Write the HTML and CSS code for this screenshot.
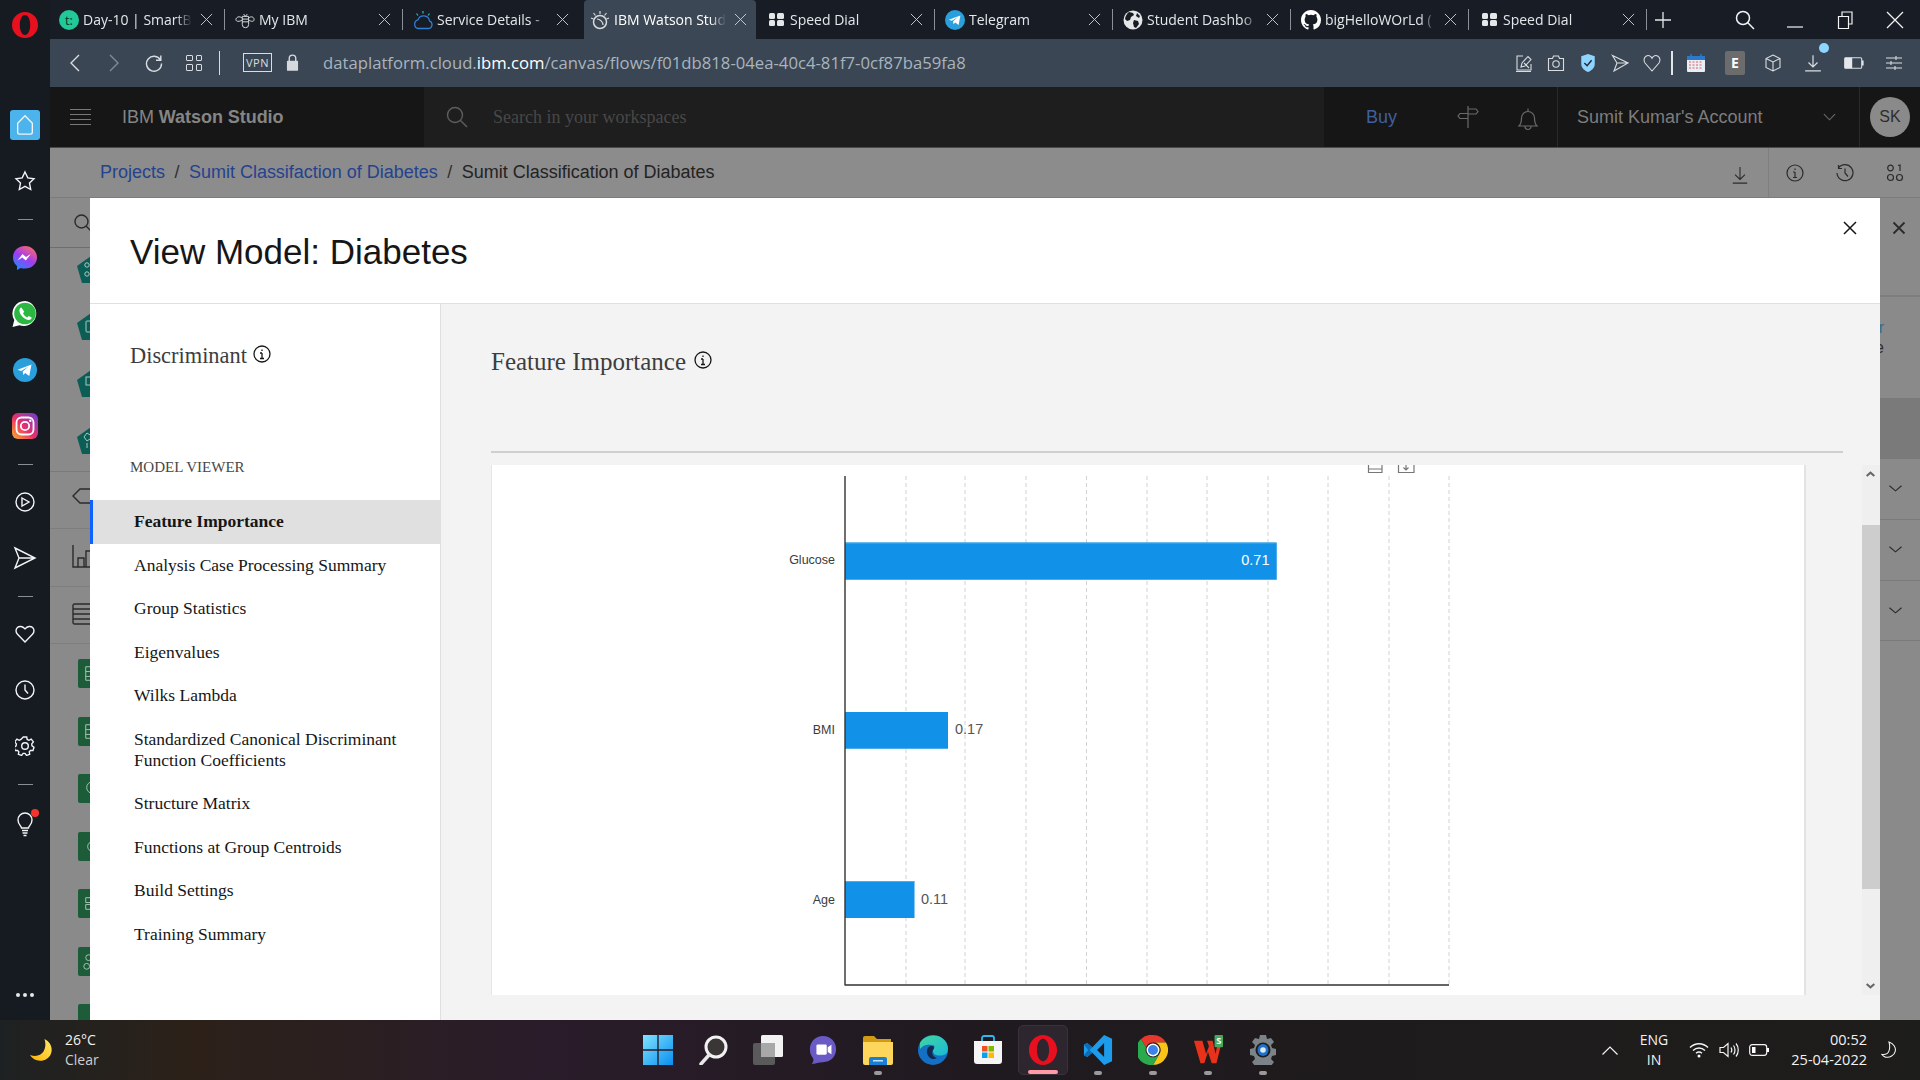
FILE: index.html
```html
<!DOCTYPE html>
<html lang="en">
<head>
<meta charset="utf-8">
<title>IBM Watson Studio</title>
<link rel="stylesheet" href="styles.css">
</head>
<body>
<div class="desktop">
  <aside class="rail">
    <div class="rail-logo">
      <svg class="s26" viewBox="0 0 26 26"><path fill="#e8101f" fill-rule="evenodd" d="M13 0a13 13 0 1 0 0 26a13 13 0 1 0 0-26zM13 3c3.200 0 5.200 4.500 5.200 10s-2 10-5.200 10s-5.200-4.500-5.200-10s2-10 5.200-10z"/></svg>
    </div>
    <div class="rail-home">
      <span class="home-btn"><svg class="s22" viewBox="0 0 22 24"><path class="w15" d="M11 2L3 10v10a2 2 0 0 0 2 2h12a2 2 0 0 0 2-2V10z"/></svg></span>
    </div>
    <div class="rail-item"><svg class="s22" viewBox="0 0 22 22"><path class="w14" d="M11 2l2.800 5.900 6.200.8-4.500 4.400 1.200 6.400L11 16.400l-5.700 3.100 1.200-6.400L2 8.700l6.200-.8z"/></svg></div>
    <div class="rail-sep rail-sep-wide"><i></i></div>
    <div class="rail-item">
      <svg class="s26" viewBox="0 0 26 26"><defs><linearGradient id="msg" x1="0.2" y1="1" x2="0.8" y2="0"><stop offset="0" stop-color="#1a8cff"/><stop offset=".5" stop-color="#a33bf0"/><stop offset="1" stop-color="#ff6a6a"/></linearGradient></defs><path fill="url(#msg)" d="M13 1C6 1 1 6 1 12.500c0 3.500 1.500 6.500 4 8.500v4l3.700-2c1.400.4 2.800.6 4.300.6c7 0 12-5 12-11.100S20 1 13 1z"/><path fill="#fff" d="M5.500 15.500l5-6.500 3.500 3 4.800-3-5 6.500-3.500-3z"/></svg>
    </div>
    <div class="rail-item">
      <svg class="s26" viewBox="0 0 26 26"><path fill="#fff" d="M13 0a12.500 12.500 0 0 0-10.700 19L.5 26l7-1.800A12.500 12.500 0 1 0 13 0z"/><circle cx="13" cy="12.500" r="10.800" fill="#2bb741"/><path fill="#fff" d="M9.300 6.500c-.6 0-1.900 1-1.900 3c0 4 5.200 9.500 9.300 9.500c2 0 3.100-1.400 3-2.500l-3-1.600-1.400 1.500c-1.800-.6-3.600-2.400-4.300-4.200l1.300-1.400z"/></svg>
    </div>
    <div class="rail-item">
      <svg class="s24" viewBox="0 0 24 24"><circle cx="12" cy="12" r="12" fill="#2a9fdc"/><path fill="#fff" d="M4.500 11.800l14-5.300-2.200 11.400-4.100-2.800-2 2-.5-3.500 5.600-4.900-7.200 4.300z"/></svg>
    </div>
    <div class="rail-item">
      <svg class="s26" viewBox="0 0 26 26"><defs><linearGradient id="ig" x1="0" y1="1" x2="1" y2="0"><stop offset="0" stop-color="#fdb022"/><stop offset=".45" stop-color="#e8306b"/><stop offset="1" stop-color="#6a3fd6"/></linearGradient></defs><rect width="26" height="26" rx="6" fill="url(#ig)"/><rect x="4.500" y="4.500" width="17" height="17" rx="5" class="w18"/><circle cx="13" cy="13" r="4.200" class="w18"/><circle cx="18.300" cy="7.700" r="1.200" fill="#fff"/></svg>
    </div>
    <div class="rail-sep"><i></i></div>
    <div class="rail-item"><svg class="s20" viewBox="0 0 20 20"><circle cx="10" cy="10" r="9" class="w14"/><path class="w14" d="M7 6l7 4-7 4z"/></svg></div>
    <div class="rail-item"><svg class="s24" viewBox="0 0 24 24"><path class="w14" d="M2 2l20 10L2 22l4-10zM6 12h16"/></svg></div>
    <div class="rail-sep"><i></i></div>
    <div class="rail-item"><svg class="s20" viewBox="0 0 20 18"><path class="w14" d="M10 17L2.500 9.300C.5 7.200.6 4.300 2.400 2.600c1.900-1.700 5.100-1.500 7.600 1.300c2.500-2.800 5.700-3 7.600-1.300c1.800 1.700 1.900 4.600-.1 6.700z"/></svg></div>
    <div class="rail-item"><svg class="s20" viewBox="0 0 20 20"><circle cx="10" cy="10" r="9" class="w14"/><path class="w14" d="M10 4.500V10l3 3.500"/></svg></div>
    <div class="rail-item"><svg class="s20" viewBox="0 0 20 20"><path class="w14" d="M8.300 1h3.400l.5 2.500 1.700.8 2.300-1.200 2.200 2.800-1.700 2 .3 1.900 2 1.400-1 3.300-2.500-.1-1.200 1.400.4 2.500-3.200 1.100-1.500-2h-1.900l-1.500 2-3.200-1.100.4-2.500-1.200-1.400-2.500.1-1-3.300 2-1.400.3-1.900-1.700-2 2.200-2.800 2.300 1.200 1.700-.8z"/><circle cx="10" cy="10" r="3.300" class="w14"/></svg></div>
    <div class="rail-sep"><i></i></div>
    <div class="rail-item rail-bulb">
      <svg class="bulb-ic" viewBox="0 0 22 26"><path class="w14" d="M7.500 17c0-2-3.500-3.500-3.500-8a7 7 0 1 1 14 0c0 4.500-3.500 6-3.500 8zM8 19.500h6M8.500 22h5M9.500 24.500h3"/></svg>
      <span class="bulb-dot"></span>
    </div>
    <div class="rail-dots"><i></i><i></i><i></i></div>
  </aside>

  <main class="browser">
    <div class="tabstrip">
      <div class="tab tab-first">
        <span class="tab-icon"><span class="tico-t">t:</span></span>
        <span class="tab-title">Day-10 | SmartB</span>
        <svg class="tab-x" viewBox="0 0 14 14"><path d="M1 1l12 12M13 1L1 13"/></svg>
      </div>
      <div class="tab">
        <span class="tab-icon"><svg class="s20" viewBox="0 0 22 16"><path class="g11" d="M8 4h7v9a3.500 3.500 0 0 1-7 0zM8 7h7M8 10h7M9.500 1.500l2 2.500 2-2.500"/><path class="g11" d="M8 6C5 3 1 5 1 7.500S5 10 8 8M15 6c3-3 6-1 6 1.500S18 10 15 8"/></svg></span>
        <span class="tab-title">My IBM</span>
        <svg class="tab-x" viewBox="0 0 14 14"><path d="M1 1l12 12M13 1L1 13"/></svg>
      </div>
      <div class="tab tab-before-active">
        <span class="tab-icon"><svg class="s20" viewBox="0 0 20 20"><path fill="none" stroke="#2f7fd6" stroke-width="1.300" d="M5 18.500h10a4 4 0 0 0 1.500-7.700a6 6 0 0 0-11.500-1a4.500 4.500 0 0 0 0 8.700z"/><path fill="none" stroke="#2fb8c8" stroke-width="1.200" d="M10 1v2.500M3.500 3.500l1.500 2M16.500 3.500L15 5.500"/></svg></span>
        <span class="tab-title">Service Details -</span>
        <svg class="tab-x" viewBox="0 0 14 14"><path d="M1 1l12 12M13 1L1 13"/></svg>
      </div>
      <div class="tab tab-active">
        <span class="tab-icon"><svg class="s20" viewBox="0 0 20 20"><circle cx="10" cy="12" r="6.500" fill="none" stroke="#d7dade" stroke-width="1.500"/><path fill="none" stroke="#d7dade" stroke-width="1.200" d="M10 1v3M3.500 3l2 2.500M16.500 3l-2 2.500M1 8l2.500 1M19 8l-2.500 1M7 9c3 0 6 3 6 6"/></svg></span>
        <span class="tab-title tab-title-on">IBM Watson Stud</span>
        <svg class="tab-x" viewBox="0 0 14 14"><path d="M1 1l12 12M13 1L1 13"/></svg>
      </div>
      <div class="tab">
        <span class="tab-icon"><span class="dial"><i></i><i></i><i></i><i></i></span></span>
        <span class="tab-title">Speed Dial</span>
        <svg class="tab-x" viewBox="0 0 14 14"><path d="M1 1l12 12M13 1L1 13"/></svg>
      </div>
      <div class="tab">
        <span class="tab-icon"><svg class="s20" viewBox="0 0 24 24"><circle cx="12" cy="12" r="12" fill="#2a9fdc"/><path fill="#fff" d="M4.500 11.800l14-5.300-2.200 11.400-4.100-2.800-2 2-.5-3.500 5.600-4.900-7.200 4.300z"/></svg></span>
        <span class="tab-title">Telegram</span>
        <svg class="tab-x" viewBox="0 0 14 14"><path d="M1 1l12 12M13 1L1 13"/></svg>
      </div>
      <div class="tab">
        <span class="tab-icon"><svg class="s20" viewBox="0 0 20 20"><circle cx="10" cy="10" r="9.500" fill="#e4e6e8"/><path fill="#171c24" d="M6 2l4 1 1 2-3 2-1 3-3 1-2-2c.5-3 2-5.500 4-7zM11 10l4 1 1 3-3 4-2-1-1-4zM14 3l3 3-1 2-3-2z"/></svg></span>
        <span class="tab-title">Student Dashbo</span>
        <svg class="tab-x" viewBox="0 0 14 14"><path d="M1 1l12 12M13 1L1 13"/></svg>
      </div>
      <div class="tab">
        <span class="tab-icon"><svg class="s20" viewBox="0 0 16 16"><path fill="#fff" d="M8 0C3.580 0 0 3.580 0 8c0 3.540 2.290 6.530 5.470 7.590.4.070.55-.17.550-.38 0-.19-.010-.82-.010-1.490-2.010.37-2.530-.49-2.690-.94-.09-.23-.48-.94-.82-1.130-.28-.15-.68-.52-.010-.53.630-.010 1.080.58 1.230.82.720 1.210 1.870.87 2.330.66.070-.52.280-.87.510-1.070-1.780-.2-3.640-.89-3.640-3.950 0-.87.310-1.590.82-2.150-.08-.2-.36-1.020.08-2.120 0 0 .67-.21 2.200.82a7.420 7.420 0 0 1 4 0c1.530-1.040 2.200-.82 2.200-.82.440 1.100.16 1.920.08 2.120.51.560.82 1.270.82 2.150 0 3.070-1.870 3.750-3.650 3.950.29.250.54.730.54 1.480 0 1.070-.010 1.930-.010 2.200 0 .21.150.46.550.38A8.010 8.010 0 0 0 16 8c0-4.420-3.580-8-8-8z"/></svg></span>
        <span class="tab-title">bigHelloWOrLd (</span>
        <svg class="tab-x" viewBox="0 0 14 14"><path d="M1 1l12 12M13 1L1 13"/></svg>
      </div>
      <div class="tab">
        <span class="tab-icon"><span class="dial"><i></i><i></i><i></i><i></i></span></span>
        <span class="tab-title">Speed Dial</span>
        <svg class="tab-x" viewBox="0 0 14 14"><path d="M1 1l12 12M13 1L1 13"/></svg>
      </div>
      <svg class="tab-plus" viewBox="0 0 16 16"><path d="M8 0v16M0 8h16"/></svg>
      <div class="win-controls">
        <svg class="s20" viewBox="0 0 20 20"><circle cx="8" cy="8" r="6.500" class="w15"/><path class="w15" d="M12.800 12.800L19 19"/></svg>
        <svg class="s20 win-min" viewBox="0 0 20 20"><path class="w12" d="M2 17h16"/></svg>
        <svg class="s20" viewBox="0 0 20 20"><path class="w12" d="M3.500 6.500h10v12h-10zM7 6.500V2h10v12h-3.500"/></svg>
        <svg class="s20" viewBox="0 0 20 20"><path class="w12" d="M2 2l16 16M18 2L2 18"/></svg>
      </div>
    </div>

    <div class="addressbar">
      <div class="nav">
        <svg class="nav-ic" viewBox="0 0 12 20"><path class="l14" d="M10 2L2 10l8 8"/></svg>
        <svg class="nav-ic nav-off" viewBox="0 0 12 20"><path class="l14" d="M2 2l8 8-8 8"/></svg>
        <svg class="s18" viewBox="0 0 18 18"><path class="l14" d="M15.500 6A7.500 7.500 0 1 0 16.500 9.500M15.800 1.500v4.800H11"/></svg>
        <span class="nav-grid"><i></i><i></i><i></i><i></i></span>
        <span class="nav-sep"></span>
        <span class="vpn">VPN</span>
        <svg class="lock" viewBox="0 0 14 20"><path fill="none" stroke="#d5d9de" stroke-width="1.500" d="M3.500 9V5.500a3.500 3.500 0 0 1 7 0V9"/><rect x="1" y="8" width="12" height="11" rx="1" fill="#d5d9de"/></svg>
      </div>
      <div class="url">dataplatform.cloud.<b>ibm.com</b>/canvas/flows/f01db818-04ea-40c4-81f7-0cf87ba59fa8</div>
      <div class="addr-tools">
        <span class="t1"><svg class="s18" viewBox="0 0 18 18"><path class="l11" d="M8 2H2v14h14v-6M1 17.500h15M6 13l1-4 6-6.500 3 3-6 6.500zM9 9l5 5"/></svg></span>
        <span class="t2"><svg class="s18" viewBox="0 0 18 16"><path class="l11" d="M1.500 3.500h4l1-2.500h5l1 2.500h4v12h-15z"/><circle cx="9" cy="9" r="3.200" class="l11"/></svg></span>
        <span class="t3"><svg class="s18" viewBox="0 0 16 20"><path fill="#8ed4ff" d="M8 0l7.500 2.500V11c0 4.500-3.500 7-7.500 9c-4-2-7.500-4.500-7.500-9V2.500z"/><path fill="none" stroke="#1f2a36" stroke-width="1.600" d="M4 10l3 3 5-6"/></svg></span>
        <span class="t4"><svg class="s18" viewBox="0 0 18 18"><path class="l11" d="M1.500 1.500L17 9 3 17l3-8zM6 9h11"/></svg></span>
        <span class="t5"><svg class="s18" viewBox="0 0 18 18"><path class="l11" d="M9 17L2 9C.3 6.500 1 3.500 3 2.200c2.200-1.400 4.700-.6 6 2c1.300-2.600 3.800-3.400 6-2C17 3.500 17.700 6.500 16 9z"/></svg></span>
        <span class="t6"></span>
        <span class="t7"><svg class="s18" viewBox="0 0 18 18"><rect y="2" width="18" height="16" rx="1" fill="#e9eef2"/><rect y="2" width="18" height="4" fill="#2c78c9"/><path d="M4 0v4M14 0v4" stroke="#2c78c9" stroke-width="1.500"/><path d="M2 8h14M2 11h14M2 14h14" stroke="#e58a9c" stroke-width="1.400" stroke-dasharray="2 1.500"/></svg></span>
        <span class="t8">E</span>
        <span class="t9"><svg class="s18" viewBox="0 0 16 18"><path class="l11" d="M8 1l7 3.500v9L8 17l-7-3.500v-9zM1 4.500L8 8l7-3.500M8 8v9"/></svg></span>
        <span class="t10"><svg class="s18" viewBox="0 0 16 16"><path class="l11" d="M8 1v10M4 7.500L8 11.500l4-4M1 15h14"/></svg><i class="dl-dot"></i></span>
        <span class="t11"><svg class="batt" viewBox="0 0 20 12"><rect x=".7" y=".7" width="17" height="10.600" rx="1" class="l11"/><rect x=".7" y=".7" width="7.500" height="10.600" fill="#e5e8eb"/><rect x="18" y="3.500" width="1.600" height="5" fill="#e5e8eb"/></svg></span>
        <span class="t12"><svg class="s18" viewBox="0 0 18 16"><path class="l11" d="M1 3h16M1 8h16M1 13h16M11 1v4M6 6v4M10 11v4"/></svg></span>
      </div>
    </div>

    <header class="appbar">
      <div class="app-brand">
        <span class="burger"><i></i><i></i><i></i><i></i></span>
        <span class="brand-name">IBM <b>Watson Studio</b></span>
      </div>
      <div class="app-search">
        <svg class="s22" viewBox="0 0 22 22"><circle cx="9" cy="9" r="7.500" class="d14"/><path class="d14" d="M14.500 14.500L21 21"/></svg>
        <span>Search in your workspaces</span>
      </div>
      <div class="app-actions">
        <span class="buy">Buy</span>
        <svg class="ic-sign" viewBox="0 0 22 24"><path class="d12" d="M11 1v22M11 4h8l2 2.500L19 9h-8M11 8.500H3L1 11l2 2.500h8"/></svg>
        <svg class="ic-bell" viewBox="0 0 22 26"><path class="d12" d="M2 20c2-2 2.500-4 2.500-8a6.500 6.500 0 0 1 13 0c0 4 .5 6 2.500 8zM8 20.500a3 3 0 0 0 6 0M11 2.500V5"/></svg>
      </div>
      <div class="app-account">
        <span>Sumit Kumar's Account</span>
        <svg class="acc-chev" viewBox="0 0 14 8"><path class="d12" d="M1 1l6 6 6-6"/></svg>
      </div>
      <div class="app-avatar"><span>SK</span></div>
    </header>

    <nav class="crumbs">
      <div class="crumb-path">
        <a>Projects</a><span class="slash">/</span><a>Sumit Classifaction of Diabetes</a><span class="slash">/</span><span class="crumb-now">Sumit Classification of Diabates</span>
      </div>
      <div class="crumb-dl"><svg class="s18" viewBox="0 0 16 20"><path class="k12" d="M8 1v14M2.500 9.500L8 15l5.500-5.500M0 19h16"/></svg></div>
      <div class="crumb-tools">
        <svg class="s18" viewBox="0 0 18 18"><circle cx="9" cy="9" r="8" class="k12"/><path class="k12" d="M9 8v5.500M7 13.500h4M7 8h2M9 4.500v1.500"/></svg>
        <svg class="s18" viewBox="0 0 18 18"><path class="k12" d="M2.500 4A8 8 0 1 1 1 9M2.500 1v3.500H6M9 4.500V9l3 3.500"/></svg>
        <svg class="s18" viewBox="0 0 18 18"><circle cx="4.500" cy="4" r="2.800" class="k12"/><path class="k12" d="M12 1.500l2-.5v6"/><circle cx="4.500" cy="13.500" r="3" class="k12"/><circle cx="13.500" cy="13.500" r="3" class="k12"/></svg>
      </div>
    </nav>

    <section class="workspace">
      <div class="back-left">
        <div class="back-search"><svg class="s18" viewBox="0 0 18 18"><circle cx="7.500" cy="7.500" r="6.500" class="k14"/><path class="k14" d="M12 12l5.500 5.500"/></svg></div>
        <div class="back-group">
          <div class="pent"><svg class="pent-ic" viewBox="0 0 28 27"><path fill="#0b5d55" d="M14 0L28 10 23 27H5L0 10z"/><circle cx="10" cy="9" r="2.200" fill="none" stroke="#a9c9c5"/><circle cx="10" cy="18" r="2.200" fill="none" stroke="#a9c9c5"/></svg></div>
          <div class="pent"><svg class="pent-ic" viewBox="0 0 28 27"><path fill="#0b5d55" d="M14 0L28 10 23 27H5L0 10z"/><rect x="9" y="8" width="12" height="11" rx="1" fill="none" stroke="#a9c9c5"/></svg></div>
          <div class="pent"><svg class="pent-ic" viewBox="0 0 28 27"><path fill="#0b5d55" d="M14 0L28 10 23 27H5L0 10z"/><rect x="9" y="7" width="12" height="8" fill="none" stroke="#a9c9c5"/></svg></div>
          <div class="pent"><svg class="pent-ic" viewBox="0 0 28 27"><path fill="#0b5d55" d="M14 0L28 10 23 27H5L0 10z"/><path d="M10 6l6 4-6 4-3-4zM10 16v5" fill="none" stroke="#a9c9c5"/></svg></div>
        </div>
        <div class="back-row"><svg class="back-ic" viewBox="0 0 30 24"><path class="k14" d="M8 1h20v14H8L1 8zM19 12h10M19 15h10M19 18h10"/></svg></div>
        <div class="back-row"><svg class="back-ic" viewBox="0 0 30 24"><path class="k14" d="M1 0v22h28M6 22v-9h6v9M14 22V6h6v16"/></svg></div>
        <div class="back-row"><svg class="back-ic" viewBox="0 0 30 24"><rect x="1" y="1" width="28" height="20" rx="1.500" class="k14"/><path class="k14" d="M1 6h28M1 11h28M1 16h28"/></svg></div>
        <div class="tile-row"><svg class="tile" viewBox="0 0 30 30"><rect width="30" height="30" rx="2" fill="#1c5c39"/><path d="M8 8h12v14H8zM8 13h12M8 18h12M14 8v14" fill="none" stroke="#a8c6b4"/></svg></div>
        <div class="tile-row"><svg class="tile" viewBox="0 0 30 30"><rect width="30" height="30" rx="2" fill="#1c5c39"/><path d="M8 8h12v14H8zM8 13h12M8 18h12M14 8v14" fill="none" stroke="#a8c6b4"/></svg></div>
        <div class="tile-row"><svg class="tile" viewBox="0 0 30 30"><rect width="30" height="30" rx="2" fill="#1c5c39"/><circle cx="15" cy="14" r="6" fill="none" stroke="#a8c6b4"/></svg></div>
        <div class="tile-row"><svg class="tile" viewBox="0 0 30 30"><rect width="30" height="30" rx="2" fill="#1c5c39"/><circle cx="15" cy="15" r="5" fill="none" stroke="#a8c6b4"/></svg></div>
        <div class="tile-row"><svg class="tile" viewBox="0 0 30 30"><rect width="30" height="30" rx="2" fill="#1c5c39"/><path d="M8 9h12v5H8zM8 16h12v5H8z" fill="none" stroke="#a8c6b4"/></svg></div>
        <div class="tile-row"><svg class="tile" viewBox="0 0 30 30"><rect width="30" height="30" rx="2" fill="#1c5c39"/><circle cx="11" cy="11" r="3" fill="none" stroke="#a8c6b4"/><circle cx="9" cy="20" r="3" fill="none" stroke="#a8c6b4"/></svg></div>
        <div class="tile-row"><svg class="tile" viewBox="0 0 30 30"><rect width="30" height="30" rx="2" fill="#1c5c39"/></svg></div>
      </div>
      <div class="back-right">
        <div class="br-close"><svg class="s14" viewBox="0 0 14 14"><path class="k18" d="M1.500 1.500l11 11M12.500 1.500l-11 11"/></svg></div>
        <div class="br-blank"><span class="br-r">r</span><span class="br-e">e</span></div>
        <div class="br-dark"></div>
        <div class="br-row"><svg class="br-chev" viewBox="0 0 14 7"><path class="k12" d="M.5.500L7 6l6.500-5.500"/></svg></div>
        <div class="br-row"><svg class="br-chev" viewBox="0 0 14 7"><path class="k12" d="M.5.500L7 6l6.500-5.500"/></svg></div>
        <div class="br-row"><svg class="br-chev" viewBox="0 0 14 7"><path class="k12" d="M.5.500L7 6l6.500-5.500"/></svg></div>
      </div>

      <div class="modal">
        <div class="modal-head">
          <h1>View Model: Diabetes</h1>
          <svg class="s14 modal-x" viewBox="0 0 14 14"><path class="b14" d="M1 1l12 12M13 1L1 13"/></svg>
        </div>
        <div class="modal-body">
          <div class="mv-side">
            <h2 class="mv-title">Discriminant <svg class="info" viewBox="0 0 18 18"><circle cx="9" cy="9" r="8" class="b13"/><path class="b13" d="M9 8v5.500M7 13.500h4M7 8h2M9 4.500v1.500"/></svg></h2>
            <div class="mv-label">MODEL VIEWER</div>
            <ul class="mv-list">
              <li class="on">Feature Importance</li>
              <li>Analysis Case Processing Summary</li>
              <li>Group Statistics</li>
              <li>Eigenvalues</li>
              <li>Wilks Lambda</li>
              <li>Standardized Canonical Discriminant Function Coefficients</li>
              <li>Structure Matrix</li>
              <li>Functions at Group Centroids</li>
              <li>Build Settings</li>
              <li>Training Summary</li>
            </ul>
          </div>
          <div class="mv-main">
            <h2 class="mv-title mv-title-main">Feature Importance <svg class="info" viewBox="0 0 18 18"><circle cx="9" cy="9" r="8" class="b13"/><path class="b13" d="M9 8v5.500M7 13.500h4M7 8h2M9 4.500v1.500"/></svg></h2>
            <div class="mv-rule"></div>
            <div class="mv-view">
              <div class="chart-card">
                <svg class="chart" viewBox="0 0 1313 530">
                  <g class="grid">
                    <path d="M414 11V520M473 11V520M534 11V520M594.500 11V520M655 11V520M715 11V520M776 11V520M836 11V520M897 11V520M957 11V520"/>
                  </g>
                  <g class="tools">
                    <path d="M876.500 0V7.500H890V0M876.500 4H890M906.500 0V7.500H922V0M914 0V5M911.500 2.500L914 5l2.500-2.500"/>
                  </g>
                  <rect class="bar" x="353" y="77.500" width="431.500" height="37"/>
                  <rect class="bar" x="353" y="247" width="103" height="37"/>
                  <rect class="bar" x="353" y="416" width="69.500" height="37"/>
                  <path class="bar-edge" d="M353 78H784.500V114.500H353M353 283.500H456M353 416.500H422.500"/>
                  <path class="axis" d="M353 11V520.500M353 520H957"/>
                  <text class="lbl" x="343" y="98.500">Glucose</text>
                  <text class="lbl" x="343" y="269">BMI</text>
                  <text class="lbl" x="343" y="439">Age</text>
                  <text class="val val-in" x="777.500" y="100">0.71</text>
                  <text class="val" x="463" y="269">0.17</text>
                  <text class="val" x="429" y="439">0.11</text>
                </svg>
              </div>
              <div class="scrollbar">
                <svg class="sb-arrow" viewBox="0 0 10 6"><path d="M5 0l5 4.500L8.500 6 5 3 1.500 6 0 4.500z"/></svg>
                <div class="sb-thumb"></div>
                <svg class="sb-arrow sb-down" viewBox="0 0 10 6"><path d="M5 6L0 1.500 1.500 0 5 3l3.500-3L10 1.500z"/></svg>
              </div>
            </div>
          </div>
        </div>
      </div>
    </section>
  </main>
</div>

<footer class="taskbar">
  <div class="tb-weather">
    <svg class="moon" viewBox="0 0 24 24"><defs><linearGradient id="mo" x1="0" y1="1" x2="1" y2="0"><stop offset="0" stop-color="#ffb300"/><stop offset="1" stop-color="#ffe96a"/></linearGradient></defs><path fill="url(#mo)" d="M15.500 1c6 3 8.500 9 6.500 14.500c-2 6-9 8.800-15 6.500c-2.500-1-4.500-2.500-6-5c6 2 11 .5 13.500-3.500c2-3.500 2.500-8 1-12.500z"/></svg>
    <div class="w-text"><span>26°C</span><span class="w-sub">Clear</span></div>
  </div>
  <div class="tb-apps">
    <div class="tb-app"><svg class="s30" viewBox="0 0 30 30"><defs><linearGradient id="st" x1="0" y1="0" x2="1" y2="1"><stop offset="0" stop-color="#7fe3ff"/><stop offset="1" stop-color="#0a8ef0"/></linearGradient></defs><path fill="url(#st)" d="M0 0h14.300v14.300H0zM15.700 0H30v14.300H15.700zM0 15.700h14.300V30H0zM15.700 15.700H30V30H15.700z"/></svg></div>
    <div class="tb-app"><svg class="s30" viewBox="0 0 30 30"><circle cx="18" cy="12" r="10" fill="#3b3636" stroke="#f2f2f2" stroke-width="3"/><path d="M11 20L3 29" stroke="#e8e8e8" stroke-width="3.500" stroke-linecap="round"/></svg></div>
    <div class="tb-app"><svg class="s30" viewBox="0 0 30 30"><rect y="8" width="22" height="22" rx="2" fill="#5a5a5a"/><rect x="8" width="22" height="22" rx="1.500" fill="#f2f2f2"/><rect x="8" y="8" width="14" height="14" fill="#a8a8a8"/></svg></div>
    <div class="tb-app"><svg class="s30" viewBox="0 0 30 32"><path fill="#6a5ac6" d="M15 1c8 0 14 6 14 14s-6 14-14 14c-3 0-6 1-12 2c2-3 2-4 1.500-6C2 22 1 19 1 15C1 7 7 1 15 1z"/><rect x="8" y="10" width="11" height="11" rx="1.500" fill="#fff"/><path fill="#fff" d="M20 13l4-2.500v10L20 18z"/></svg></div>
    <div class="tb-app tb-dot"><svg class="s30" viewBox="0 0 30 30"><path fill="#d39a13" d="M0 3a2 2 0 0 1 2-2h9l3 3h14v6H0z"/><path fill="#ffd65c" d="M0 7h30v21a2 2 0 0 1-2 2H2a2 2 0 0 1-2-2z"/><path fill="#1a7fd0" d="M6 30v-6a2 2 0 0 1 2-2h14a2 2 0 0 1 2 2v6z"/><rect x="10" y="25" width="10" height="1.500" fill="#bfe3ff"/></svg></div>
    <div class="tb-app"><svg class="s30" viewBox="0 0 30 30"><defs><linearGradient id="ed1" x1="0" y1="0" x2="1" y2="1"><stop offset="0" stop-color="#42d6a0"/><stop offset="1" stop-color="#1ab8d8"/></linearGradient></defs><circle cx="15" cy="15" r="15" fill="#1470c4"/><path fill="url(#ed1)" d="M2 8C6 1 16-2 24 3c6 4 7 10 5 15c-3 3-8 3-11 2c-3-1-4-5-2-7c1-1 1-3-2-3C9 9 5 10 2 14z"/><path fill="#13284a" d="M13 11c3 0 4 2 2 4c-2 3 0 7 4 8c-5 3-9-1-10-5c-.5-3 1-7 4-7z"/></svg></div>
    <div class="tb-app"><svg class="s30" viewBox="0 0 30 30"><path fill="none" stroke="#2eb8f0" stroke-width="1.800" d="M9 8V3a2 2 0 0 1 2-2h8a2 2 0 0 1 2 2v5"/><path fill="#f5f5f5" d="M1 6h28v20a3 3 0 0 1-3 3H4a3 3 0 0 1-3-3z"/><rect x="9" y="11" width="5.500" height="5.500" fill="#f25022"/><rect x="15.500" y="11" width="5.500" height="5.500" fill="#7fba00"/><rect x="9" y="17.500" width="5.500" height="5.500" fill="#00a4ef"/><rect x="15.500" y="17.500" width="5.500" height="5.500" fill="#ffb900"/></svg></div>
    <div class="tb-app tb-opera"><svg class="s30" viewBox="0 0 30 32"><path fill="#e8101f" fill-rule="evenodd" d="M15 0C6.700 0 0 7.200 0 16s6.700 16 15 16s15-7.200 15-16S23.300 0 15 0zM15 4c3.800 0 6.500 5.400 6.500 12S18.800 28 15 28S8.500 22.600 8.500 16S11.200 4 15 4z"/></svg></div>
    <div class="tb-app tb-dot"><svg class="s30" viewBox="0 0 30 32"><path fill="#1d9ceb" d="M21.500 0L30 4v24l-8.500 4L9 19l-5.500 4.500L0 21.500v-11L3.500 8.500 9 13zM21.500 8.500L14 16l7.500 7.500z"/><path fill="#0a6fb8" d="M0 10.500L3.500 8.500 9 13l-3 3 3 3-5.500 4.500L0 21.500l4.500-5.500z"/></svg></div>
    <div class="tb-app tb-dot"><svg class="s30" viewBox="0 0 30 30"><path fill="#e8382e" d="M15 0a15 15 0 0 1 13 7.500H15a7.500 7.500 0 0 0-7 5L3 4A15 15 0 0 1 15 0z"/><path fill="#f8c418" d="M28 7.500A15 15 0 0 1 15 30l6.500-11.200A7.500 7.500 0 0 0 21.500 11c-1-1.500-2-3.500-6.500-3.500z"/><path fill="#2ba94d" d="M3 4a15 15 0 0 0 12 26l6.500-11.200a7.500 7.500 0 0 1-13.500-6.300z"/><circle cx="15" cy="15" r="6.500" fill="#fff"/><circle cx="15" cy="15" r="5" fill="#3d82e8"/></svg></div>
    <div class="tb-app tb-dot"><svg class="s30" viewBox="0 0 30 32"><path fill="#e8321a" d="M0 6h9l4 14 3-8-2-6h6l3 14 3-14h4l-6 24h-5l-4-12-4 12H7z"/><rect x="22" y="0" width="9" height="13" rx="1" fill="#46a85a"/><text class="wps-s" x="26.500" y="10">S</text></svg></div>
    <div class="tb-app tb-dot"><svg class="s30" viewBox="0 0 30 30"><path fill="#7b8288" d="M12 0h6l1 4 4-1 3 4-3 3 1 3 4 1v6l-4 1-1 3 3 3-3 4-4-1-1 4h-6l-1-4-4 1-3-4 3-3-1-3-4-1v-6l4-1 1-3-3-3 3-4 4 1z"/><circle cx="15" cy="15" r="7.500" fill="#1e1e1e"/><ellipse cx="15" cy="15" rx="5.500" ry="6" fill="#1f70c8"/><circle cx="15" cy="15" r="2.800" fill="#dfeaf5"/></svg></div>
  </div>
  <div class="tb-tray">
    <svg class="tray-chev" viewBox="0 0 16 9"><path class="w12" d="M.5 8.500L8 1l7.500 7.500"/></svg>
    <div class="tray-lang"><span>ENG</span><span>IN</span></div>
    <div class="tray-icons">
      <svg class="s20" viewBox="0 0 20 16"><path class="w14" d="M1 5.500c5-5 13-5 18 0M4 8.500c3.500-3.300 8.500-3.300 12 0M7 11.300c1.800-1.500 4.200-1.500 6 0"/><circle cx="10" cy="14" r="1.500" fill="#fff"/></svg>
      <svg class="s20" viewBox="0 0 20 16"><path class="w12" d="M1 5.500h3.500L9 1.500v13l-4.500-4H1zM12 5.500c1 1.500 1 3.500 0 5M14.500 3.500c2 2.500 2 6.500 0 9M17 1.500c3 3.500 3 9.500 0 13"/></svg>
      <svg class="s20" viewBox="0 0 20 12"><rect x=".7" y=".7" width="17" height="10.600" rx="2.500" class="w12"/><rect x="3" y="3" width="3.500" height="6" fill="#fff"/><rect x="18" y="4" width="2" height="4" fill="#fff"/></svg>
    </div>
    <div class="tray-clock"><span>00:52</span><span>25-04-2022</span></div>
    <svg class="tray-moon" viewBox="0 0 18 20"><path class="w12" d="M9 1c5.500 2 8 6.500 7 10.500c-1 4.500-6 7.500-11 6.500c-2-.5-3-1.500-4-3c4 .5 7-1 8-4c1-3 1-6.500 0-10z"/></svg>
  </div>
</footer>
</body>
</html>
```

FILE: styles.css
```css
* { box-sizing: border-box; }
html, body { margin: 0; padding: 0; }
body {
  width: 1920px;
  height: 1080px;
  overflow: hidden;
  display: flex;
  flex-direction: column;
  font-family: "Liberation Sans", Arial, sans-serif;
  background: #161b22;
}
svg { display: block; flex: none; }
i { display: block; }

.s14 { width: 14px; height: 14px; }
.s18 { width: 18px; height: 18px; }
.s20 { width: 20px; height: 20px; }
.s22 { width: 22px; height: 22px; }
.s24 { width: 24px; height: 24px; }
.s26 { width: 26px; height: 26px; }
.s30 { width: 30px; height: 30px; }

.w12, .w14, .w15, .w18 { fill: none; stroke: #f2f4f6; }
.w12 { stroke-width: 1.2; }
.w14 { stroke-width: 1.4; }
.w15 { stroke-width: 1.5; }
.w18 { stroke-width: 1.8; stroke: #fff; }
.g11 { fill: none; stroke: #d5d8dc; stroke-width: 1.1; }
.l11, .l14 { fill: none; stroke: #d9dde1; }
.l11 { stroke-width: 1.1; }
.l14 { stroke-width: 1.4; }
.d12, .d14 { fill: none; stroke: #6a6a6a; }
.d12 { stroke-width: 1.2; }
.d14 { stroke-width: 1.4; stroke: #5e5e5e; }
.k12, .k14, .k18 { fill: none; stroke: #2b2b2b; }
.k12 { stroke-width: 1.2; }
.k14 { stroke-width: 1.4; }
.k18 { stroke-width: 1.8; }
.b13, .b14 { fill: none; stroke: #161616; }
.b13 { stroke-width: 1.3; }
.b14 { stroke-width: 1.5; }

.desktop { flex: 1; display: flex; min-height: 0; }

/* Opera side rail */
.rail { width: 50px; flex: none; background: #161b22; display: flex; flex-direction: column; align-items: center; }
.rail-logo { height: 50px; width: 100%; display: flex; align-items: center; justify-content: center; }
.rail-home { margin-top: 47px; height: 56px; display: flex; align-items: center; }
.home-btn { width: 30px; height: 30px; border-radius: 3px; background: #4db3ec; display: flex; align-items: center; justify-content: center; }
.rail-item { height: 56px; width: 100%; display: flex; align-items: center; justify-content: center; position: relative; flex: none; }
.rail-sep { height: 20px; width: 100%; display: flex; align-items: center; justify-content: center; flex: none; }
.rail-sep-wide { height: 21px; }
.rail-sep i { width: 15px; height: 1px; background: #8a8e93; }
.rail-bulb { margin-top: 2px; }
.bulb-ic { width: 22px; height: 26px; }
.bulb-dot { position: absolute; left: 31px; top: 13px; width: 8px; height: 8px; border-radius: 50%; background: #f5332d; }
.rail-dots { margin-top: auto; height: 50px; display: flex; align-items: center; gap: 3px; }
.rail-dots i { width: 4px; height: 4px; border-radius: 50%; background: #e6e8ea; }

.browser { flex: 1; min-width: 0; display: flex; flex-direction: column; }

/* Tabs */
.tabstrip { height: 39px; flex: none; display: flex; align-items: stretch; background: #171c25; font-family: "Open Sans", sans-serif; font-size: 14px; color: #e4e7ea; position: relative; }
.tab { width: 178px; flex: none; display: flex; align-items: center; padding: 0 12px 0 10px; position: relative; }
.tab::after { content: ""; position: absolute; right: 0; top: 9px; height: 21px; width: 1px; background: #8a9098; }
.tab-first { width: 175px; padding-left: 9px; }
.tab-before-active::after, .tab-active::after { display: none; }
.tab-active { width: 172px; margin-left: 3px; padding: 0 9px 0 6px; background: #3b4754; border-radius: 4px 4px 0 0; }
.tab-active + .tab { padding-left: 10px; width: 179px; }
.tab-icon { width: 20px; height: 20px; flex: none; display: flex; align-items: center; justify-content: center; margin-right: 4px; }
.tab-title { flex: 1; min-width: 0; white-space: nowrap; overflow: hidden; -webkit-mask-image: linear-gradient(to left, transparent 0, #000 16px); mask-image: linear-gradient(to left, transparent 0, #000 16px); }
.tab-title-on { color: #fff; }
.tab-x { width: 13px; height: 13px; margin-left: 8px; fill: none; stroke: #ccd0d5; stroke-width: 1; }
.tico-t { width: 20px; height: 20px; border-radius: 50%; background: #20c997; color: #12352c; font-size: 13px; display: flex; align-items: center; justify-content: center; }
.dial { width: 15px; height: 13px; display: grid; grid-template-columns: 1fr 1fr; gap: 1.500px; }
.dial i { background: #e4e7ea; border-radius: 1.500px; }
.tab-plus { width: 16px; height: 16px; align-self: center; margin-left: 8px; fill: none; stroke: #e4e7ea; stroke-width: 1.3; }
.win-controls { margin-left: auto; display: flex; align-items: center; gap: 30px; padding-right: 15px; }

/* Address bar */
.addressbar { height: 48px; flex: none; background: #3a4653; display: flex; align-items: center; padding-bottom: 1px; }
.nav { display: flex; align-items: center; width: 273px; padding-left: 19px; }
.nav-ic { width: 12px; height: 20px; margin-right: 27px; }
.nav-off { opacity: .45; margin-right: 25px; }
.nav-grid { width: 16px; height: 16px; margin-left: 23px; display: grid; grid-template-columns: 1fr 1fr; gap: 3px; }
.nav-grid i { border: 1.200px solid #d9dde1; border-radius: 1px; }
.nav-sep { width: 1px; height: 24px; background: #d9dde1; margin: 0 23px 0 17px; }
.vpn { width: 29px; height: 19px; border: 1px solid #d9dde1; font-size: 11px; font-family: "Open Sans", sans-serif; color: #d9dde1; display: flex; align-items: center; justify-content: center; letter-spacing: .5px; }
.lock { width: 13px; height: 19px; margin-left: 14px; }
.url { font-family: "Open Sans", sans-serif; font-size: 16.700px; color: #a9b4bf; white-space: nowrap; }
.url b { font-weight: 400; color: #fff; }
.addr-tools { margin-left: auto; display: flex; align-items: center; padding-right: 6px; }
.addr-tools > span { display: flex; align-items: center; justify-content: center; width: 32px; position: relative; }
.addr-tools .t6 { width: 8px; height: 24px; }
.addr-tools .t6::before { content: ""; width: 2px; height: 24px; background: #e2e5e8; }
.addr-tools .t7 { width: 40px; }
.addr-tools .t8 { width: 20px; height: 24px; margin: 0 9px; background: #6c6c6c; border-radius: 2px; color: #fff; font: 700 14px "Open Sans", sans-serif; }
.addr-tools .t9 { width: 38px; }
.addr-tools .t10 { width: 42px; }
.addr-tools .t11 { width: 40px; }
.addr-tools .t12 { width: 40px; }
.batt { width: 20px; height: 12px; }
.dl-dot { position: absolute; top: -11px; left: 27px; width: 10px; height: 10px; border-radius: 50%; background: #8dd6ff; }

/* IBM header */
.appbar { height: 61px; flex: none; background: #161616; display: flex; align-items: stretch; border-bottom: 1px solid #4b4b4b; }
.app-brand { width: 374px; display: flex; align-items: center; padding-left: 20px; }
.burger { width: 21px; height: 17px; display: flex; flex-direction: column; justify-content: space-between; margin-right: 31px; }
.burger i { height: 1.500px; background: #787878; }
.brand-name { font-size: 18px; color: #858585; white-space: nowrap; letter-spacing: -.05px; }
.brand-name b { font-weight: 700; }
.app-search { width: 900px; background: #1e1e1e; display: flex; align-items: center; padding-left: 22px; font-family: "Liberation Serif", serif; font-size: 18px; color: #484848; gap: 25px; }
.app-actions { width: 234px; display: flex; align-items: center; padding-left: 42px; border-right: 1px solid #2a2a2a; }
.buy { font-size: 18px; color: #3f5f9e; }
.ic-sign { width: 22px; height: 24px; margin-left: 60px; }
.ic-bell { width: 22px; height: 26px; margin-left: 38px; margin-top: 3px; }
.app-account { width: 302px; display: flex; align-items: center; padding-left: 19px; font-size: 18px; color: #7d7d7d; border-right: 1px solid #2a2a2a; }
.acc-chev { width: 13px; height: 8px; margin-left: auto; margin-right: 23px; }
.app-avatar { flex: 1; display: flex; align-items: center; justify-content: center; }
.app-avatar span { width: 40px; height: 40px; border-radius: 50%; background: #8a8a8a; color: #2d2d2d; font-size: 16px; display: flex; align-items: center; justify-content: center; }

/* Breadcrumb */
.crumbs { height: 50px; flex: none; background: #8c8c8c; display: flex; align-items: center; border-bottom: 1px solid #7c7c7c; }
.crumb-path { padding-left: 50px; font-size: 18px; letter-spacing: -.01px; display: flex; align-items: center; color: #232323; }
.crumb-path a { color: #24428f; }
.slash { margin: 0 9.500px; color: #303030; }
.crumb-dl { margin-left: auto; width: 45px; display: flex; justify-content: center; padding-right: 11px; margin-top: 5px; }
.crumb-tools { height: 100%; border-left: 1px solid #7f7f7f; display: flex; align-items: center; padding: 0 16px 0 17px; gap: 32px; }

/* Workspace behind the dialog */
.workspace { flex: 1; min-height: 0; background: #8a8a8a; position: relative; display: flex; justify-content: space-between; overflow: hidden; }
.back-left { width: 40px; overflow: hidden; display: flex; flex-direction: column; }
.back-search { height: 50px; flex: none; padding: 16px 0 0 24px; border-bottom: 1px solid #6f6f6f; }
.back-group { height: 224px; flex: none; padding-top: 8px; border-bottom: 1px solid #7a7a7a; display: flex; flex-direction: column; gap: 30px; }
.pent { height: 27px; padding-left: 27px; }
.pent-ic { width: 28px; height: 27px; }
.back-row { height: 57.300px; flex: none; display: flex; align-items: center; padding-left: 22px; border-bottom: 1px solid #7e7e7e; }
.back-ic { width: 30px; height: 24px; }
.tile-row { height: 57.500px; flex: none; display: flex; align-items: center; padding: 2px 0 0 28px; }
.tile { width: 29px; height: 29px; }
.back-right { width: 40px; display: flex; flex-direction: column; }
.br-close { height: 99px; flex: none; display: flex; justify-content: center; padding-top: 23px; padding-right: 2px; border-bottom: 2px solid #7e7e7e; }
.br-blank { height: 101px; flex: none; display: flex; flex-direction: column; align-items: flex-end; width: 10px; margin-left: -6px; padding-top: 21px; font-size: 16px; line-height: 20px; }
.br-r { color: #2f6f8f; }
.br-e { color: #2d2d2d; }
.br-dark { height: 61px; flex: none; background: #7a7a7a; }
.br-row { height: 60.800px; flex: none; display: flex; align-items: center; justify-content: center; padding-right: 9px; border-bottom: 1px solid #7a7a7a; }
.br-chev { width: 13px; height: 7px; }

/* Dialog */
.modal { position: absolute; left: 40px; right: 40px; top: 0; bottom: 0; background: #fff; display: flex; flex-direction: column; }
.modal-head { height: 106px; flex: none; border-bottom: 1px solid #e0e0e0; display: flex; align-items: center; justify-content: space-between; padding: 0 23px 0 40px; }
.modal-head h1 { margin: 2px 0 0; font-size: 35px; font-weight: 400; color: #161616; }
.modal-x { margin-top: -45px; }
.modal-body { flex: 1; min-height: 0; display: flex; }
.mv-side { width: 351px; flex: none; border-right: 1px solid #e0e0e0; padding-top: 37px; overflow: hidden; }
.mv-title { margin: 0; padding-left: 40px; font: 400 22.400px/30px "Liberation Serif", serif; color: #3d3d3d; display: flex; align-items: center; gap: 6px; }
.info { width: 18px; height: 18px; margin-top: -4px; }
.mv-label { margin: 88px 0 0 40px; font: 400 15px/16px "Liberation Serif", serif; color: #474747; }
.mv-list { list-style: none; margin: 25px 0 0; padding: 0; font: 400 17.500px/21px "Liberation Serif", serif; color: #161616; }
.mv-list li { padding: 11.250px 30px 11.250px 44px; }
.mv-list li.on { background: #e0e0e0; font-weight: 700; box-shadow: inset 3px 0 0 #0f62fe; }
.mv-main { flex: 1; min-width: 0; background: #f3f3f3; padding: 43px 0 0 50px; display: flex; flex-direction: column; }
.mv-title-main { padding-left: 0; font-size: 25px; gap: 8px; }
.mv-rule { height: 2px; margin: 74px 37px 0 0; background: #cfcfcf; }
.mv-view { margin-top: 12px; display: flex; justify-content: space-between; height: 530px; }
.chart-card { width: 1315px; background: #fff; border-left: 1px solid #e6e6e6; border-right: 2px solid #e3e3e3; }
.chart { width: 1313px; height: 530px; font-family: "Liberation Sans", sans-serif; }
.grid path { fill: none; stroke: #d2d2d2; stroke-dasharray: 4 3; }
.tools path { fill: none; stroke: #777; stroke-width: 1.2; }
.bar { fill: #1192e8; }
.bar-edge { fill: none; stroke: #4dace9; }
.axis { fill: none; stroke: #333; stroke-width: 1.400; }
.lbl { font-size: 12.500px; text-anchor: end; fill: #3b3b3b; }
.val { font-size: 14.500px; fill: #555; }
.val-in { fill: #fff; text-anchor: end; }
.scrollbar { width: 18px; background: #efefef; position: relative; }
.sb-thumb { position: absolute; left: 0; right: 0; top: 60px; height: 364px; background: #cdcdcd; }
.sb-arrow { position: absolute; left: 4px; top: 6px; width: 9px; height: 6px; fill: #666; }
.sb-down { top: auto; bottom: 6px; }

/* Taskbar */
.taskbar { height: 60px; flex: none; display: grid; grid-template-columns: 633px 660px 1fr; background: linear-gradient(90deg, #1e2122 0, #2c2119 10%, #2a1c2a 28%, #201a20 50%, #1e1b1c 70%, #1d1d1b 100%); color: #f2f2f2; font-family: "Open Sans", sans-serif; font-size: 14px; }
.tb-weather { display: flex; align-items: center; padding-left: 29px; gap: 12px; }
.moon { width: 24px; height: 24px; }
.w-text { display: flex; flex-direction: column; line-height: 20px; }
.w-sub { color: #cfcfcf; }
.tb-apps { display: flex; align-items: center; gap: 5px; }
.tb-app { width: 50px; height: 50px; display: flex; align-items: center; justify-content: center; position: relative; border-radius: 5px; }
.tb-dot::after { content: ""; position: absolute; left: 21px; bottom: 0; width: 8px; height: 4px; border-radius: 2px; background: #9a9a9a; }
.tb-opera { background: #2e262e; border: 1px solid #3a323a; }
.tb-opera::after { content: ""; position: absolute; left: 9px; bottom: 0; width: 30px; height: 4px; border-radius: 2px; background: #ff9aa6; }
.wps-s { font: 700 10px "Open Sans", sans-serif; fill: #fff; text-anchor: middle; }
.tb-tray { display: flex; align-items: center; padding-left: 309px; }
.tray-chev { width: 16px; height: 9px; }
.tray-lang { width: 46px; margin-left: 13px; display: flex; flex-direction: column; align-items: center; line-height: 20px; }
.tray-icons { display: flex; align-items: center; gap: 10px; margin-left: 12px; }
.tray-clock { width: 90px; margin-left: 8px; display: flex; flex-direction: column; align-items: flex-end; line-height: 20px; font-size: 14.500px; }
.tray-moon { width: 16px; height: 18px; margin-left: 14px; }
```
